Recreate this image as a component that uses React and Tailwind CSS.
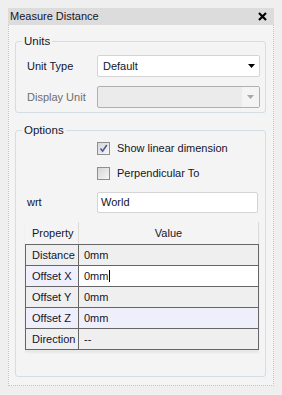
import React from "react";

function Tri({ color }) {
  return (
    <svg width="7" height="4" viewBox="0 0 7 4">
      <polygon points="0,0 7,0 3.5,4" fill={color} />
    </svg>
  );
}

function Check({ checked }) {
  return (
    <div className="w-[13px] h-[13px] border border-[#8e8f8f] bg-gradient-to-br from-[#d6d6d6] to-[#f7f7f7] flex items-center justify-center shrink-0">
      {checked && (
        <svg width="9" height="9" viewBox="0 0 9 9">
          <path d="M1.5 4.5 L3.6 7.2 L7.8 1" fill="none" stroke="#4b5c9f" strokeWidth="1.6" />
        </svg>
      )}
    </div>
  );
}

function Row({ name, value, c1, c2, cursor, last }) {
  return (
    <div className={"flex h-[21px] border-x border-t border-[#666666] " + (last ? "border-b h-[22px]" : "")}>
      <div className={"w-[53px] border-r border-[#666666] pl-[6px] flex items-center " + c1}>{name}</div>
      <div className={"flex-1 pl-[5px] flex items-center " + c2}>
        {value}
        {cursor && <span className="w-px h-[12px] bg-black ml-[1px]" />}
      </div>
    </div>
  );
}

export default function App() {
  return (
    <div className="w-[282px] h-[395px] bg-[#efefef] px-[8px] pt-[8px] font-['Liberation_Sans',Arial,sans-serif] text-[11px] text-[#14142b] leading-[13px]">
      <div className="w-[266px]">
        <div className="h-[17px] bg-[#dcdcdc] flex items-center justify-between pl-[2px] pr-[7px]">
          <span className="text-[11px]">Measure Distance</span>
          <svg width="9" height="9" viewBox="0 0 9 9">
            <path d="M1 1 L8 8 M8 1 L1 8" stroke="#000" strokeWidth="2.2" />
          </svg>
        </div>
        <div className="h-[361px] border-x border-b border-dotted border-[#c4c4c4] bg-[#f4f4f4] pl-[6px] pt-[16px]">
          {/* Units */}
          <div className="relative w-[251px] border border-[#d3dde4] rounded-[3px] pt-[13px] pb-[4px]">
            <span className="absolute left-[6px] top-[-8px] px-[2px] bg-[#f4f4f4] leading-[14px] text-[11.5px]">Units</span>
            <div className="flex items-center pl-[11px]">
              <span className="w-[70px]">Unit Type</span>
              <div className="h-[22px] w-[163px] border border-[#d4d4d4] rounded-[2px] bg-white flex items-center justify-between pl-[5px] pr-[4px]">
                <span>Default</span>
                <Tri color="#000" />
              </div>
            </div>
            <div className="flex items-center pl-[11px] mt-[9px]">
              <span className="w-[70px] text-[#6d6d6d]">Display Unit</span>
              <div className="h-[22px] w-[163px] border border-[#b0b0b0] rounded-[2px] bg-[#ebebeb] flex justify-end overflow-hidden">
                <div className="w-[17px] bg-[#f4f4f4] flex items-center justify-center pr-[1px]">
                  <Tri color="#a8a8a8" />
                </div>
              </div>
            </div>
          </div>
          {/* Options */}
          <div className="relative w-[251px] mt-[17px] border border-[#d3dde4] rounded-[3px] pt-[11px] pb-[26px]">
            <span className="absolute left-[6px] top-[-8px] px-[2px] bg-[#f4f4f4] leading-[14px] text-[11.5px]">Options</span>
            <div className="flex items-center pl-[81px] gap-[7px] h-[13px]">
              <Check checked />
              <span>Show linear dimension</span>
            </div>
            <div className="flex items-center pl-[81px] gap-[7px] h-[13px] mt-[12px]">
              <Check />
              <span>Perpendicular To</span>
            </div>
            <div className="flex items-center pl-[11px] mt-[12px]">
              <span className="w-[70px]">wrt</span>
              <div className="h-[21px] w-[161px] border border-[#d4d4d4] rounded-[2px] bg-white flex items-center pl-[3px]">
                World
              </div>
            </div>
            <div className="mt-[9px] ml-[9px] w-[234px] shadow-[0_3px_2px_rgba(0,0,0,0.05)]">
              <div className="flex h-[22px]">
                <div className="w-[54px] border-r border-[#dadada] pl-[7px] flex items-center">Property</div>
                <div className="flex-1 border-r border-[#dadada] flex items-center justify-center">Value</div>
              </div>
              <Row name="Distance" value="0mm" c1="bg-[#efefef]" c2="bg-[#efefef]" />
              <Row name="Offset X" value="0mm" c1="bg-[#efeffd]" c2="bg-white" cursor />
              <Row name="Offset Y" value="0mm" c1="bg-[#efefef]" c2="bg-[#efefef]" />
              <Row name="Offset Z" value="0mm" c1="bg-[#efeffb]" c2="bg-[#efeffb]" />
              <Row name="Direction" value="--" c1="bg-[#efefef]" c2="bg-[#efefef]" last />
            </div>
          </div>
        </div>
      </div>
    </div>
  );
}
